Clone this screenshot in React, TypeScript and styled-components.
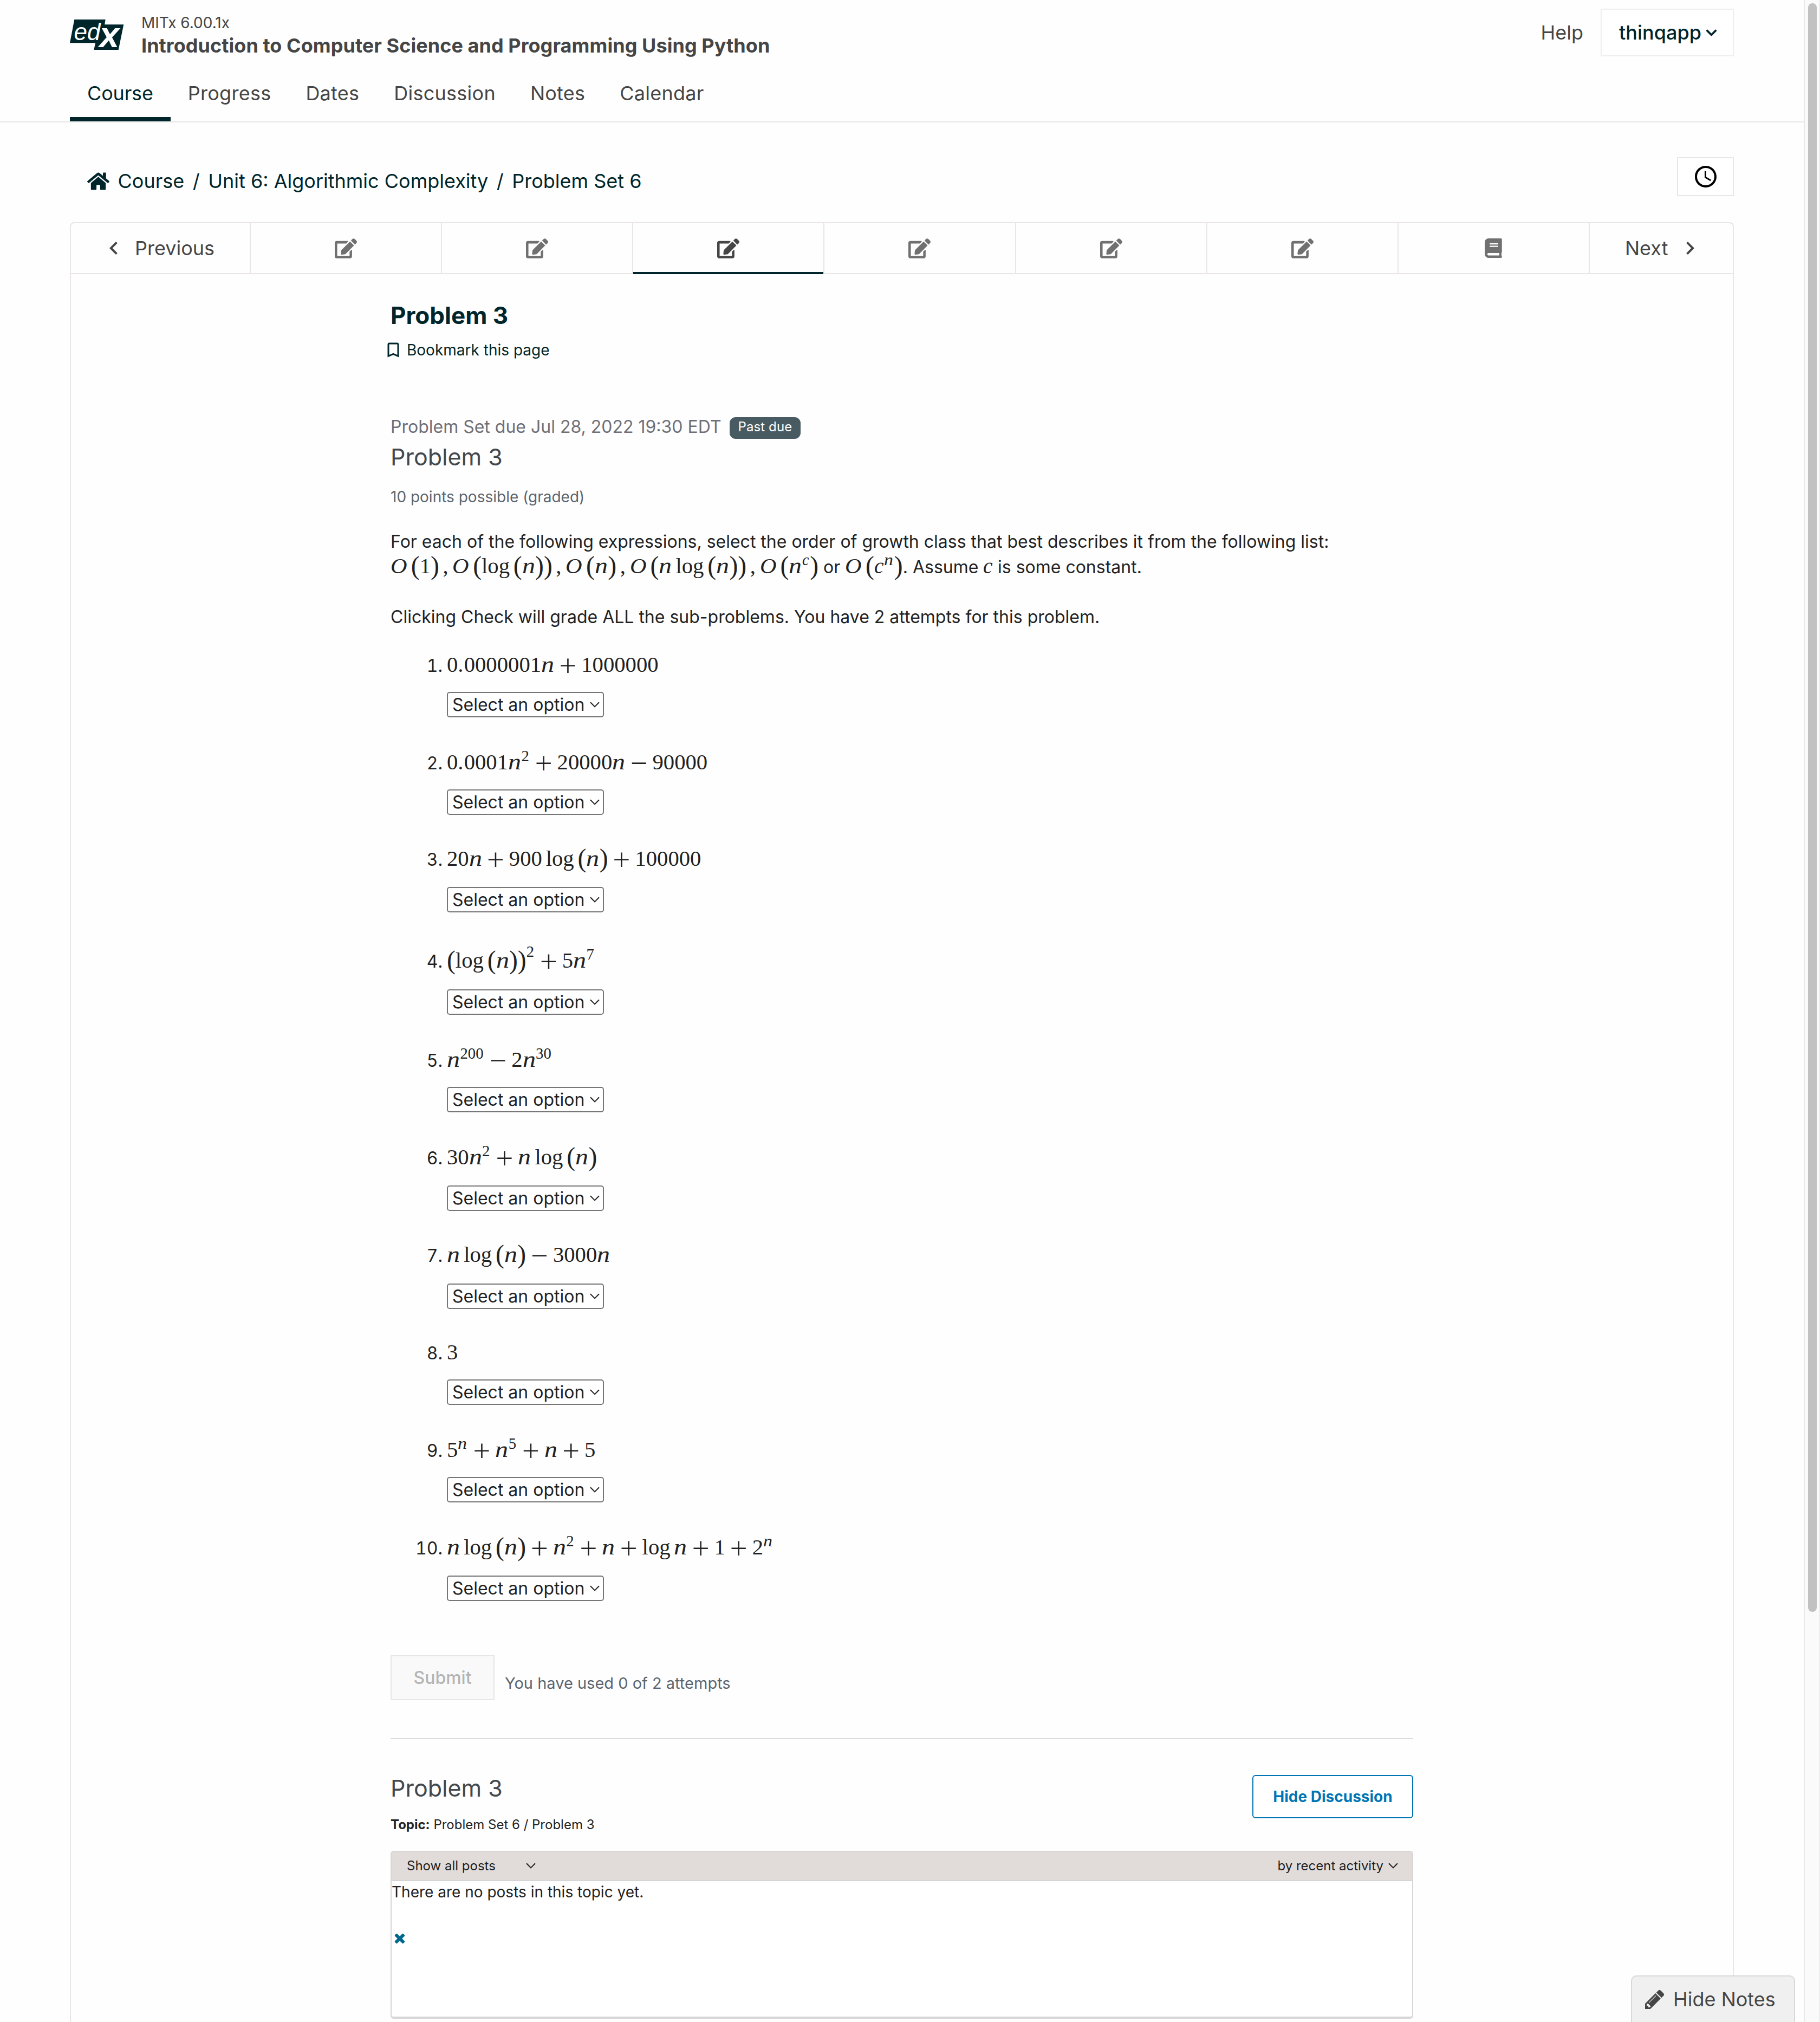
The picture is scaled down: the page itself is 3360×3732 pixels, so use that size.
import React from "react";
import styled, { createGlobalStyle, css } from "styled-components";
import { FaBook, FaChevronDown, FaEdit, FaHome } from "react-icons/fa";
import { MdAccessTime, MdBookmarkBorder, MdChevronLeft, MdChevronRight } from "react-icons/md";

const color = {
  brand: "#00262b",
  text: "#454545",
  body: "#222222",
  muted: "#707070",
  line: "#e9e6e5",
  blue: "#0075b4",
};

const GlobalStyle = createGlobalStyle`
  html, body { margin: 0; background: #fefefe; }
  *, *::before, *::after { box-sizing: border-box; }
  body { font-family: Inter, "Liberation Sans", sans-serif; color: ${color.body}; overflow: hidden; }
  button { font-family: inherit; margin: 0; padding: 0; }
  svg { display: block; flex: none; }
`;

/* ---------- page frame ---------- */

const Page = styled.div`
  position: relative;
  display: flex;
  height: 3732px;
  overflow: hidden;
`;

const Main = styled.main`
  width: 3330px;
  display: flex;
  flex-direction: column;
`;

const ScrollTrack = styled.div`
  width: 30px;
  padding: 6px 4px 0 6px;
  background: #fafafa;
  border-left: 2px solid #e8e8e8;
  border-right: 2px solid #ededed;
`;

const ScrollThumb = styled.div`
  width: 16px;
  height: 2969px;
  border-radius: 8px;
  background: #c1c1c1;
`;

/* ---------- header ---------- */

const Header = styled.header`
  padding: 0 129px;
  border-bottom: 2px solid #e9e8e8;
`;

const HeaderTop = styled.div`
  display: flex;
  align-items: center;
  height: 120px;
`;

const Logo = styled.svg`
  margin-top: 8px;
  overflow: visible;
`;

const CourseTitle = styled.div`
  margin: 12px auto 0 32px;
  color: ${color.text};
`;

const CourseOrg = styled.div`
  font-size: 28px;
  line-height: 36px;
`;

const CourseName = styled.div`
  font-size: 36px;
  font-weight: 700;
  line-height: 48px;
  letter-spacing: 0.05px;
`;

const HelpLink = styled.a`
  margin-right: 32px;
  font-size: 36px;
  color: ${color.text};
`;

const UserButton = styled.button`
  display: flex;
  align-items: center;
  justify-content: center;
  gap: 7px;
  width: 246px;
  height: 88px;
  padding-left: 4px;
  background: #fff;
  border: 2px solid #eeeeee;
  font-size: 36px;
  font-weight: 500;
  color: ${color.brand};
`;

const Tabs = styled.nav`
  display: flex;
  height: 104px;
`;

const Tab = styled.a<{ $active?: boolean }>`
  display: flex;
  align-items: center;
  padding: 0 32px;
  border: solid transparent;
  border-width: 8px 0;
  font-size: 36px;
  letter-spacing: ${p => (p.$active ? -0.15 : 0.25)}px;
  color: ${p => (p.$active ? color.brand : color.text)};
  border-bottom-color: ${p => (p.$active ? color.brand : "transparent")};
`;

/* ---------- breadcrumb ---------- */

const Toolbar = styled.div`
  display: flex;
  justify-content: space-between;
  align-items: flex-start;
  height: 120px;
  margin: 64px 129px 0;
`;

const Crumbs = styled.div`
  display: flex;
  align-items: center;
  gap: 15.5px;
  padding: 22px 0 0 32px;
  font-size: 36px;
  line-height: 44px;
  color: ${color.brand};
`;

const ClockButton = styled.button`
  display: flex;
  align-items: center;
  justify-content: center;
  width: 105px;
  height: 72px;
  background: #fff;
  border: 2px solid ${color.line};
  color: #000;
`;

/* ---------- sequence ---------- */

const Sequence = styled.section`
  flex: 1;
  margin: 0 129px;
  border: 2px solid ${color.line};
  border-bottom: 0;
  border-radius: 8px 8px 0 0;
`;

const SequenceNav = styled.div`
  display: flex;
  height: 94px;
`;

const navCell = css`
  display: flex;
  align-items: center;
  border-bottom: 2px solid ${color.line};
  font-size: 36px;
`;

const PrevButton = styled.a`
  ${navCell}
  width: 330px;
  padding-left: 55px;
  gap: 15px;
  color: ${color.text};
`;

const NextButton = styled.a`
  ${navCell}
  width: 266px;
  padding-left: 65px;
  gap: 17px;
  border-left: 2px solid ${color.line};
  color: ${color.text};
`;

const UnitTab = styled.a<{ $active?: boolean }>`
  ${navCell}
  flex: 1;
  justify-content: center;
  position: relative;
  border-left: 2px solid ${color.line};
  color: ${p => (p.$active ? color.text : color.muted)};
  ${p =>
    p.$active &&
    css`
      &::after {
        content: "";
        position: absolute;
        left: 0;
        right: 0;
        bottom: -2px;
        height: 4px;
        background: ${color.brand};
      }
    `}
`;

const Unit = styled.div`
  width: 1888px;
  margin: 0 auto;
  padding-top: 50px;
`;

const UnitTitle = styled.h1`
  margin: 0;
  font-size: 44px;
  font-weight: 700;
  line-height: 52px;
  color: ${color.brand};
`;

const Bookmark = styled.a`
  display: flex;
  align-items: center;
  gap: 7px;
  margin: 16px 0 0 -13px;
  font-size: 28px;
  line-height: 44px;
  color: ${color.brand};
`;

const DueRow = styled.div`
  display: flex;
  align-items: flex-start;
  gap: 15px;
  height: 45px;
  margin-top: 98px;
  font-size: 32px;
  line-height: 44px;
  color: #6f6f78;
`;

const Badge = styled.span`
  height: 40px;
  margin-top: 4px;
  padding: 0 16px;
  border-radius: 11px;
  background: #485b63;
  font-size: 24px;
  line-height: 35px;
  letter-spacing: 0.1px;
  color: #fff;
`;

const ProblemTitle = styled.h2`
  margin: 6px 0 0;
  font-size: 43px;
  font-weight: 400;
  line-height: 52px;
  color: #43484c;
`;

const Points = styled.div`
  margin-top: 28px;
  font-size: 28px;
  line-height: 40px;
  color: #5c656e;
`;

const Prompt = styled.p<{ $space: number }>`
  margin: ${p => p.$space}px 0 0;
  height: 46px;
  font-size: 32px;
  line-height: 46px;
  white-space: nowrap;
`;

/* ---------- question list ---------- */

const Questions = styled.div`
  padding-top: 42px;
`;

const Question = styled.div<{ $above: number; $below: number }>`
  display: grid;
  grid-template-columns: 96px auto;
  grid-template-rows: 50px auto;
  column-gap: 8px;
  justify-content: start;
  row-gap: ${p => p.$below}px;
  margin-top: ${p => p.$above}px;
  font-size: 32px;
`;

const QuestionNumber = styled.span`
  text-align: right;
  line-height: 52px;
  font-variant-numeric: tabular-nums;
`;

const Expression = styled.div`
  height: 50px;
  line-height: 52px;
  white-space: nowrap;
`;

const OptionSelect = styled.button`
  grid-column: 2;
  display: flex;
  align-items: center;
  gap: 9.5px;
  width: 290px;
  height: 47px;
  padding-left: 8px;
  background: #fff;
  border: 2px solid #767676;
  border-radius: 5px;
  font-size: 32px;
  line-height: 40px;
  white-space: nowrap;
  color: ${color.body};
`;

/* ---------- submit ---------- */

const SubmitRow = styled.div`
  display: flex;
  align-items: center;
  gap: 19px;
  margin-top: 100px;
  padding-bottom: 70px;
  border-bottom: 2px solid #dcdcdc;
`;

const SubmitButton = styled.button`
  width: 192px;
  height: 83px;
  background: #f9f9f9;
  border: 2px solid #e6e6e6;
  font-size: 32px;
  font-weight: 500;
  color: #b4b4b4;
`;

const Attempts = styled.span`
  padding-top: 20px;
  font-size: 29px;
  color: #5c656e;
`;

/* ---------- discussion ---------- */

const DiscussionHead = styled.div`
  display: flex;
  justify-content: space-between;
  align-items: flex-start;
  margin-top: 58px;
`;

const Topic = styled.div`
  margin-top: 25px;
  font-size: 24px;
  line-height: 34px;
`;

const HideDiscussion = styled.button`
  width: 297px;
  height: 80px;
  margin-top: 8px;
  background: #fff;
  border: 2px solid ${color.blue};
  border-radius: 6px;
  font-size: 28px;
  font-weight: 700;
  color: ${color.blue};
`;

const Posts = styled.div`
  height: 310px;
  margin-top: 31px;
  border: 2px solid #d8d6d6;
  border-bottom-width: 4px;
  border-radius: 6px;
  background: #fff;
`;

const PostsBar = styled.div`
  display: flex;
  align-items: center;
  height: 54px;
  padding: 0 26px 1px 28px;
  background: #e1dcda;
  border-bottom: 2px solid #d6d4d4;
  font-size: 24px;
`;

const Sort = styled.span<{ $gap: number; $right?: boolean }>`
  display: flex;
  align-items: center;
  gap: ${p => p.$gap}px;
  margin-left: ${p => (p.$right ? "auto" : "0")};
`;

const NoPosts = styled.div`
  font-size: 28px;
  line-height: 40px;
`;

const CloseLink = styled.a`
  display: inline-block;
  margin: 51px 0 0 1px;
  color: #00688d;
`;

const NotesToggle = styled.button`
  position: absolute;
  left: 3011px;
  top: 3646px;
  display: flex;
  align-items: center;
  gap: 16px;
  width: 303px;
  height: 90px;
  padding: 0 0 4px 24px;
  background: #f0f0f0;
  border: 2px solid #d9d9d9;
  border-bottom: 0;
  border-radius: 10px 10px 0 0;
  font-size: 36px;
  color: ${color.text};
`;

/* ---------- mathematics ---------- */

const MathBox = styled.span`
  font-family: "Liberation Serif", "Times New Roman", serif;
  font-size: 40.7px;
  line-height: 0;
  white-space: nowrap;
`;

const Point = styled.span`
  display: inline-block;
  width: 0.278em;
`;

const Variable = styled.span<{ $w: number; $stretch: number }>`
  display: inline-block;
  width: ${p => p.$w}em;
  font-style: italic;
  transform: scaleX(${p => p.$stretch});
  transform-origin: left;
`;

const Paren = styled.span`
  font-size: 1.17em;
  vertical-align: -0.035em;
`;

const Operator = styled.span`
  display: inline-block;
  width: 0.815em;
  font-family: Inter, sans-serif;
  font-size: 1.5em;
  font-weight: 200;
  text-align: center;
  vertical-align: -0.097em;
`;

const Thin = styled.span`
  margin-left: 0.167em;
`;

const Comma = styled.span`
  margin: 0 0.19em 0 0.16em;
`;

const Sup = styled.span<{ $high?: boolean }>`
  font-size: 0.707em;
  margin-right: 0.07em;
  vertical-align: ${p => (p.$high ? 0.69 : 0.53)}em;
`;

const variables: Record<string, [number, number]> = {
  n: [0.6, 1.18],
  c: [0.433, 0.97],
  O: [0.763, 1.04],
};

/* Space-separated tokens: `_` is a thin space, `^x` a superscript, `^^x` a raised one. */
function renderTokens(src: string): React.ReactNode[] {
  return src.split(" ").map((t, i) => {
    if (t === "_") return <Thin key={i} />;
    if (t === ",") return <Comma key={i}>,</Comma>;
    if (t === "(" || t === ")") return <Paren key={i}>{t}</Paren>;
    if (t === "+" || t === "−") return <Operator key={i}>{t}</Operator>;
    if (t.startsWith("^")) {
      const high = t.startsWith("^^");
      return <Sup key={i} $high={high}>{renderTokens(t.slice(high ? 2 : 1))}</Sup>;
    }
    if (variables[t]) {
      const [w, stretch] = variables[t];
      return <Variable key={i} $w={w} $stretch={stretch}>{t}</Variable>;
    }
    const [whole, fraction] = t.split(".");
    return (
      <React.Fragment key={i}>
        {whole}
        {fraction && <Point>.</Point>}
        {fraction}
      </React.Fragment>
    );
  });
}

const Formula = ({ children }: { children: string }) => <MathBox>{renderTokens(children)}</MathBox>;

/* ---------- icons ---------- */

const ThinChevron = ({ width = 18 }: { width?: number }) => (
  <svg width={width} height="11" viewBox="0 0 18 11" fill="none" stroke="currentColor" strokeWidth="2">
    <path d="M1 1.2 L9 9.4 L17 1.2" />
  </svg>
);

const EdxLogo = () => (
  <Logo width="100" height="56" viewBox="0 0 100 56">
    <path d="M8.3 0H65.7L64.2 9.3H99.3L89.7 56H44.3L47.2 43.3H0Z" fill={color.brand} />
    <text x="7.6" y="37.7" fontFamily="Liberation Sans, Arial, sans-serif" fontStyle="italic" fontSize="44" fill="#fff">ed</text>
    <text x="54.5" y="50.5" fontFamily="Liberation Sans, Arial, sans-serif" fontStyle="italic" fontWeight="700" fontSize="66" fill="#fff">x</text>
  </Logo>
);

const PencilIcon = () => (
  <svg width="36" height="36" viewBox="128 109 1555 1555" fill="currentColor">
    <path d="M491 1536l91-91-235-235-91 91v107h128v128h107zm523-928q0-22-22-22-10 0-17 7l-542 542q-7 7-7 17 0 22 22 22 10 0 17-7l542-542q7-7 7-17zm-54-192l416 416-832 832h-416v-416zm683 96q0 53-37 90l-166 166-416-416 166-165q36-38 90-38 53 0 91 38l235 234q37 39 37 91z" />
  </svg>
);

const CloseIcon = () => (
  <svg width="28" height="28" viewBox="0 0 1792 1792" fill="currentColor">
    <path d="M1490 1322q0 40-28 68l-136 136q-28 28-68 28t-68-28l-294-294-294 294q-28 28-68 28t-68-28l-136-136q-28-28-28-68t28-68l294-294-294-294q-28-28-28-68t28-68l136-136q28-28 68-28t68 28l294 294 294-294q28-28 68-28t68 28l136 136q28 28 28 68t-28 68l-294 294 294 294q28 28 28 68z" />
  </svg>
);

/* ---------- data ---------- */

const tabs = ["Course", "Progress", "Dates", "Discussion", "Notes", "Calendar"];

const units = ["problem", "problem", "current", "problem", "problem", "problem", "reading"];

const questions: { formula: string; above: number; below: number }[] = [
  { formula: "0.0000001 n + 1000000", above: -1, below: 24 },
  { formula: "0.0001 n ^2 + 20000 n − 90000", above: 59, below: 24 },
  { formula: "20 n + 900 _ log _ ( n ) + 100000", above: 57, below: 26 },
  { formula: "( log _ ( n ) ) ^^2 + 5 n ^7", above: 65, below: 27 },
  { formula: "n ^200 − 2 n ^30", above: 59, below: 24 },
  { formula: "30 n ^2 + n _ log _ ( n )", above: 59, below: 26 },
  { formula: "n _ log _ ( n ) − 3000 n", above: 57, below: 27 },
  { formula: "3", above: 56, below: 24 },
  { formula: "5 ^n + n ^5 + n + 5", above: 59, below: 24 },
  { formula: "n _ log _ ( n ) + n ^2 + n + log _ n + 1 + 2 ^n", above: 59, below: 26 },
];

export default function App() {
  return (
    <Page>
      <GlobalStyle />
      <Main>
        <Header>
          <HeaderTop>
            <EdxLogo />
            <CourseTitle>
              <CourseOrg>MITx 6.00.1x</CourseOrg>
              <CourseName>Introduction to Computer Science and Programming Using Python</CourseName>
            </CourseTitle>
            <HelpLink>Help</HelpLink>
            <UserButton>
              thinqapp <FaChevronDown size={23} />
            </UserButton>
          </HeaderTop>
          <Tabs>
            {tabs.map(t => (
              <Tab key={t} $active={t === "Course"}>{t}</Tab>
            ))}
          </Tabs>
        </Header>

        <Toolbar>
          <Crumbs>
            <FaHome size={41} />
            <span>Course</span>
            <span>/</span>
            <span>Unit 6: Algorithmic Complexity</span>
            <span>/</span>
            <span>Problem Set 6</span>
          </Crumbs>
          <ClockButton>
            <MdAccessTime size={48} />
          </ClockButton>
        </Toolbar>

        <Sequence>
          <SequenceNav>
            <PrevButton>
              <MdChevronLeft size={48} />
              Previous
            </PrevButton>
            {units.map((kind, i) => (
              <UnitTab key={i} $active={kind === "current"}>
                {kind === "reading" ? <FaBook size={36} /> : <FaEdit size={41} />}
              </UnitTab>
            ))}
            <NextButton>
              Next
              <MdChevronRight size={48} />
            </NextButton>
          </SequenceNav>

          <Unit>
            <UnitTitle>Problem 3</UnitTitle>
            <Bookmark>
              <MdBookmarkBorder size={36} />
              Bookmark this page
            </Bookmark>

            <DueRow>
              Problem Set due Jul 28, 2022 19:30 EDT
              <Badge>Past due</Badge>
            </DueRow>
            <ProblemTitle>Problem 3</ProblemTitle>
            <Points>10 points possible (graded)</Points>

            <Prompt $space={40}>
              For each of the following expressions, select the order of growth class that best describes it from the following list:
            </Prompt>
            <Prompt $space={1}>
              <Formula>{"O _ ( 1 ) , O _ ( log _ ( n ) ) , O _ ( n ) , O _ ( n _ log _ ( n ) ) , O _ ( n ^c )"}</Formula> or{" "}
              <Formula>{"O _ ( c ^n )"}</Formula>. Assume <Formula>c</Formula> is some constant.
            </Prompt>
            <Prompt $space={46}>
              Clicking Check will grade ALL the sub-problems. You have 2 attempts for this problem.
            </Prompt>

            <Questions>
              {questions.map((q, i) => (
                <Question key={i} $above={q.above} $below={q.below}>
                  <QuestionNumber>{i + 1}.</QuestionNumber>
                  <Expression>
                    <Formula>{q.formula}</Formula>
                  </Expression>
                  <OptionSelect>
                    Select an option <ThinChevron />
                  </OptionSelect>
                </Question>
              ))}
            </Questions>

            <SubmitRow>
              <SubmitButton disabled>Submit</SubmitButton>
              <Attempts>You have used 0 of 2 attempts</Attempts>
            </SubmitRow>

            <DiscussionHead>
              <div>
                <ProblemTitle>Problem 3</ProblemTitle>
                <Topic>
                  <b>Topic:</b> Problem Set 6 / Problem 3
                </Topic>
              </div>
              <HideDiscussion>Hide Discussion</HideDiscussion>
            </DiscussionHead>

            <Posts>
              <PostsBar>
                <Sort $gap={56}>
                  Show all posts <ThinChevron />
                </Sort>
                <Sort $gap={9} $right>
                  by recent activity <ThinChevron />
                </Sort>
              </PostsBar>
              <NoPosts>There are no posts in this topic yet.</NoPosts>
              <CloseLink>
                <CloseIcon />
              </CloseLink>
            </Posts>
          </Unit>
        </Sequence>
      </Main>

      <ScrollTrack>
        <ScrollThumb />
      </ScrollTrack>

      <NotesToggle>
        <PencilIcon />
        Hide Notes
      </NotesToggle>
    </Page>
  );
}
